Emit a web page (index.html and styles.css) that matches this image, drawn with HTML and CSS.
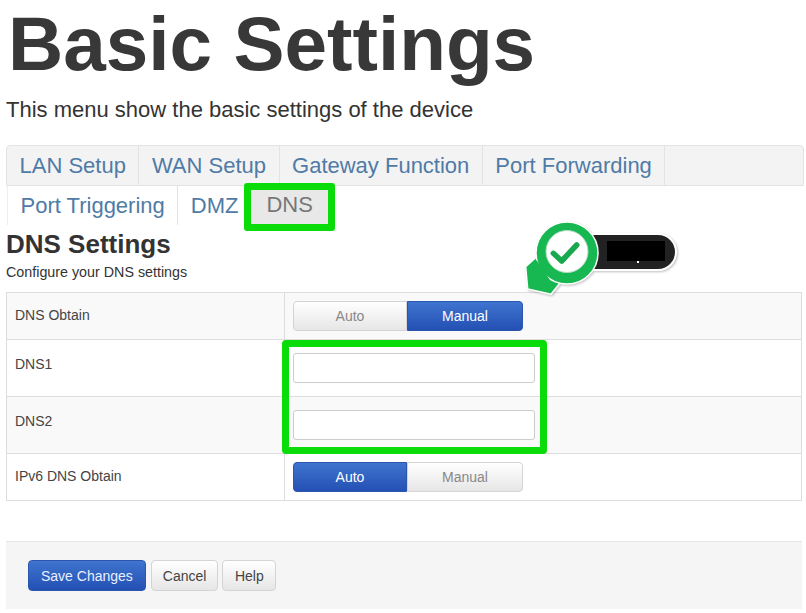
FILE: index.html
```html
<!DOCTYPE html>
<html lang="en">
<head>
  <meta charset="UTF-8">
  <title>Basic Settings</title>
  <link rel="stylesheet" href="styles.css">
</head>
<body>

<h1>Basic Settings</h1>
<p class="lead">This menu show the basic settings of the device</p>

<ul class="tabs">
  <li><a>LAN Setup</a></li>
  <li><a>WAN Setup</a></li>
  <li><a>Gateway Function</a></li>
  <li><a>Port Forwarding</a></li>
</ul>
<ul class="tabs-second">
  <li class="boxed"><a>Port Triggering</a></li>
  <li class="tight"><a>DMZ</a></li>
  <li class="active"><a>DNS</a></li>
</ul>

<div class="section">
  <h2>DNS Settings</h2>
  <p class="sub">Configure your DNS settings</p>

  <!-- badge laid over the heading area -->
  <svg class="badge" width="160" height="90" viewBox="0 0 160 90">
    <rect x="50" y="20" width="106" height="36" rx="18" fill="#222" stroke="#fff" stroke-width="2"/>
    <rect x="87" y="27" width="58" height="20" fill="#000"/>
    <rect x="117" y="47" width="2" height="2" fill="#fff"/>
    <path d="M5.7 52.7 L16.7 42.7 L40 69 L31 80.3 L7.7 75 Z" fill="#17b751" stroke="#fff" stroke-width="1.5"/>
    <circle cx="47" cy="39" r="31" fill="#17b751" stroke="#fff" stroke-width="1.5"/>
    <path d="M16.5 46 L30 66 L12 60 Z" fill="#17b751"/>
    <circle cx="47" cy="37.5" r="21" fill="#fff" stroke="#b5dcc2" stroke-width="1"/>
    <path d="M33.3 39.3 L41.7 47 L56.7 31" fill="none" stroke="#1aa84f" stroke-width="5.5" stroke-linecap="round" stroke-linejoin="round"/>
  </svg>

  <table class="settings">
    <tr class="row-short stripe">
      <td class="label">DNS Obtain</td>
      <td>
        <div class="toggle">
          <span>Auto</span>
          <span class="on">Manual</span>
        </div>
      </td>
    </tr>
    <tr class="row-tall">
      <td class="label">DNS1</td>
      <td><input type="text"></td>
    </tr>
    <tr class="row-tall stripe">
      <td class="label">DNS2</td>
      <td><input type="text"></td>
    </tr>
    <tr class="row-short">
      <td class="label">IPv6 DNS Obtain</td>
      <td>
        <div class="toggle">
          <span class="on">Auto</span>
          <span>Manual</span>
        </div>
      </td>
    </tr>
  </table>
  <div class="mark-inputs"></div>
</div>

<div class="actions">
  <button class="primary">Save Changes</button>
  <button class="cancel">Cancel</button>
  <button class="help">Help</button>
</div>

</body>
</html>
```

FILE: styles.css
```css
* {
  box-sizing: border-box;
}

body {
  margin: 0;
  padding: 0 2px 0 6px;
  font-family: "Liberation Sans", Arial, sans-serif;
  background: #fff;
  color: #333;
  height: 613px;
  overflow: hidden;
}

h1 {
  margin: 0 0 0 2px;
  padding-top: 2px;
  height: 92px;
  font-size: 76.5px;
  line-height: 84px;
  font-weight: bold;
  color: #383838;
}

.lead {
  margin: 6px 0 23px;
  font-size: 22px;
  line-height: 24px;
}

.tabs {
  list-style: none;
  margin: 0;
  padding: 0;
  display: flex;
  height: 41px;
  background: #f3f3f3;
  border: 1px solid #e3e3e3;
  border-radius: 4px 4px 0 0;
}

.tabs li {
  border-right: 1px solid #e3e3e3;
}

.tabs a,
.tabs-second a {
  display: block;
  padding: 0 12.5px;
  font-size: 22px;
  line-height: 39px;
  color: #4f7ba6;
}

.tabs-second {
  list-style: none;
  margin: 0;
  padding: 0 0 0 1px;
  display: flex;
  height: 39px;
}

.tabs-second .boxed {
  border-left: 1px solid #eee;
  border-right: 1px solid #e3e3e3;
}

.tabs-second .tight a {
  padding-right: 6px;
}

.tabs-second .active {
  position: relative;
}

.tabs-second .active a {
  position: relative;
  z-index: 1;
  color: #777;
  padding: 0 22px;
  line-height: 37px;
}

/* green annotation box */
.tabs-second .active::after {
  content: "";
  box-sizing: border-box;
  position: absolute;
  left: 0;
  right: 0;
  top: -3px;
  height: 48px;
  border: 7px solid #0adc0a;
  border-radius: 3px;
  background: #e8e8e8;
}

.section {
  position: relative;
}

h2 {
  margin: 4px 0 0;
  font-size: 26px;
  line-height: 30px;
  color: #333;
}

.sub {
  margin: 6px 0 12px;
  font-size: 14.3px;
  line-height: 15px;
}

.badge {
  position: absolute;
  left: 514px;
  top: -15px;
  filter: drop-shadow(1px 1px 1px rgba(0,0,0,0.25));
}

.settings {
  width: 796px;
  border-collapse: collapse;
  border: 1px solid #ddd;
  font-size: 14px;
}

.settings td {
  border-top: 1px solid #ddd;
  padding: 0 8px;
}

.settings .label {
  width: 278px;
  border-right: 1px solid #ddd;
  color: #444;
  padding-bottom: 2px;
}

.row-short {
  height: 47px;
}

.row-tall {
  height: 57px;
}

.settings .row-tall .label {
  padding-bottom: 9px;
}

.stripe {
  background: #f9f9f9;
}

.toggle {
  display: flex;
  width: 230px;
  height: 30px;
}

.toggle span {
  width: 114px;
  text-align: center;
  line-height: 28px;
  color: #888;
  background: linear-gradient(#fff, #e6e6e6);
  border: 1px solid #d4d4d4;
}

.toggle span:first-child {
  border-radius: 4px 0 0 4px;
}

.toggle span:last-child {
  width: 116px;
  border-radius: 0 4px 4px 0;
}

.toggle .on {
  color: #fff;
  background: linear-gradient(#3f74cf, #2450b4);
  border-color: #2a56b0;
}

input {
  display: block;
  width: 242px;
  height: 30px;
  background: #fff;
  border: 1px solid #ccc;
  border-radius: 3px;
}

.mark-inputs {
  position: absolute;
  left: 276px;
  top: 111px;
  width: 265px;
  height: 114px;
  border: 7px solid #0adc0a;
  border-radius: 4px;
}

.actions {
  margin: 40px 2px 0 0;
  height: 68px;
  padding: 18px 22px;
  display: flex;
  gap: 4px;
  background: #f5f5f5;
  border-top: 1px solid #e5e5e5;
}

button {
  height: 31px;
  padding: 0 12px;
  font-family: inherit;
  font-size: 14px;
  color: #444;
  background: linear-gradient(#fff, #e6e6e6);
  border: 1px solid #d4d4d4;
  border-radius: 4px;
}

button.primary {
  color: #e8f0ff;
  background: linear-gradient(#3f74cf, #2450b4);
  border-color: #2a56b0;
}

button.cancel {
  margin-left: 1px;
  padding: 0 11px;
}

button.help {
  padding: 0 11.5px;
}
```
